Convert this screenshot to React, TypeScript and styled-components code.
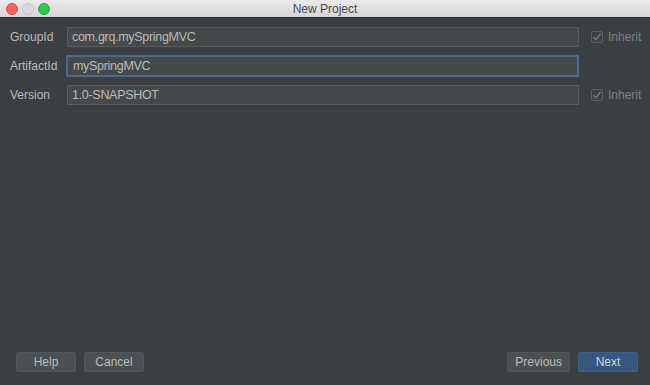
import React from 'react';
import styled, { createGlobalStyle } from 'styled-components';

const GlobalStyle = createGlobalStyle`
    html, body {
        margin: 0;
        padding: 0;
        background: #3c3f41;
    }
    * {
        box-sizing: border-box;
    }
`;

const rows = [
    { label: 'GroupId', value: 'com.grq.mySpringMVC', focused: false, inherit: true },
    { label: 'ArtifactId', value: 'mySpringMVC', focused: true, inherit: false },
    { label: 'Version', value: '1.0-SNAPSHOT', focused: false, inherit: true },
];

const App = () => {
    return (
        <Window>
            <GlobalStyle />
            <TitleBar>
                <Lights>
                    <Light color="#fc605c" border="#de4a45" />
                    <Light color="#d9d7d9" border="#c6c4c6" />
                    <Light color="#34c84a" border="#26a934" />
                </Lights>
                <Title>New Project</Title>
            </TitleBar>
            <Body>
                <Form>
                    {rows.map((r) => (
                        <Row key={r.label}>
                            <Label>{r.label}</Label>
                            <Field focused={r.focused}>{r.value}</Field>
                            {r.inherit ? (
                                <Inherit>
                                    <Check>
                                        <svg width="10" height="10" viewBox="0 0 10 10">
                                            <path d="M1.5 5.2 L4 7.8 L8.6 1.8" fill="none" stroke="#7d7f80" strokeWidth="1.3" />
                                        </svg>
                                    </Check>
                                    Inherit
                                </Inherit>
                            ) : (
                                <span />
                            )}
                        </Row>
                    ))}
                </Form>
                <Footer>
                    <Group>
                        <Button>Help</Button>
                        <Button>Cancel</Button>
                    </Group>
                    <Group>
                        <Button>Previous</Button>
                        <Button primary>Next</Button>
                    </Group>
                </Footer>
            </Body>
        </Window>
    );
};

const Window = styled.div`
    width: 650px;
    height: 385px;
    display: flex;
    flex-direction: column;
    background: #3c3f41;
    font-family: "Liberation Sans", Arial, sans-serif;
    font-size: 12px;
    color: #bbbbbb;
    overflow: hidden;
`;

const TitleBar = styled.div`
    position: relative;
    height: 18px;
    flex-shrink: 0;
    background: linear-gradient(to bottom, #ebe9eb, #d6d4d6);
    border-bottom: 1px solid #2b2b2b;
    display: flex;
    align-items: center;
    justify-content: center;
`;

const Lights = styled.div`
    position: absolute;
    left: 6px;
    top: 3px;
    display: flex;
    gap: 4px;
`;

const Light = styled.div<{ color: string; border: string }>`
    width: 12px;
    height: 12px;
    border-radius: 50%;
    background: ${(p) => p.color};
    border: 0.5px solid ${(p) => p.border};
`;

const Title = styled.div`
    font-size: 12px;
    color: #4a4a4a;
    line-height: 18px;
`;

const Body = styled.div`
    flex: 1;
    display: flex;
    flex-direction: column;
    justify-content: space-between;
    padding: 8px 12px 13px 10px;
`;

const Form = styled.div`
    display: flex;
    flex-direction: column;
    gap: 8px;
`;

const Row = styled.div`
    display: grid;
    grid-template-columns: 57px 512px 1fr;
    align-items: center;
    height: 21px;
`;

const Label = styled.div`
    font-size: 12px;
    color: #bbbbbb;
`;

const Field = styled.div<{ focused?: boolean }>`
    height: ${(p) => (p.focused ? '22px' : '20px')};
    margin: ${(p) => (p.focused ? '0 0 0 -1px' : '0')};
    display: flex;
    align-items: center;
    padding-left: ${(p) => (p.focused ? '5px' : '4px')};
    background: #45494a;
    border: ${(p) => (p.focused ? '2px solid #4a6c94' : '1px solid #5a5d5f')};
    border-radius: 1px;
    color: #bbbbbb;
    font-size: 12.5px;
    letter-spacing: -0.3px;
`;

const Inherit = styled.div`
    display: flex;
    align-items: center;
    gap: 5px;
    margin-left: 12px;
    color: #7d7f80;
    font-size: 12px;
`;

const Check = styled.div`
    width: 12px;
    height: 12px;
    border: 1px solid #5c5f61;
    border-radius: 2px;
    background: #3f4244;
    display: flex;
    align-items: center;
    justify-content: center;
`;

const Footer = styled.div`
    display: flex;
    justify-content: space-between;
    align-items: center;
    padding-left: 6px;
`;

const Group = styled.div`
    display: flex;
    gap: 8px;
`;

const Button = styled.div<{ primary?: boolean }>`
    min-width: 60px;
    height: 20px;
    padding: 0 7px;
    display: flex;
    align-items: center;
    justify-content: center;
    background: ${(p) => (p.primary ? '#365880' : '#4c5052')};
    border: 1px solid ${(p) => (p.primary ? '#3d6185' : '#545759')};
    border-radius: 2px;
    color: ${(p) => (p.primary ? '#d0d6dc' : '#bbbbbb')};
    font-size: 12px;
`;

export default App;
